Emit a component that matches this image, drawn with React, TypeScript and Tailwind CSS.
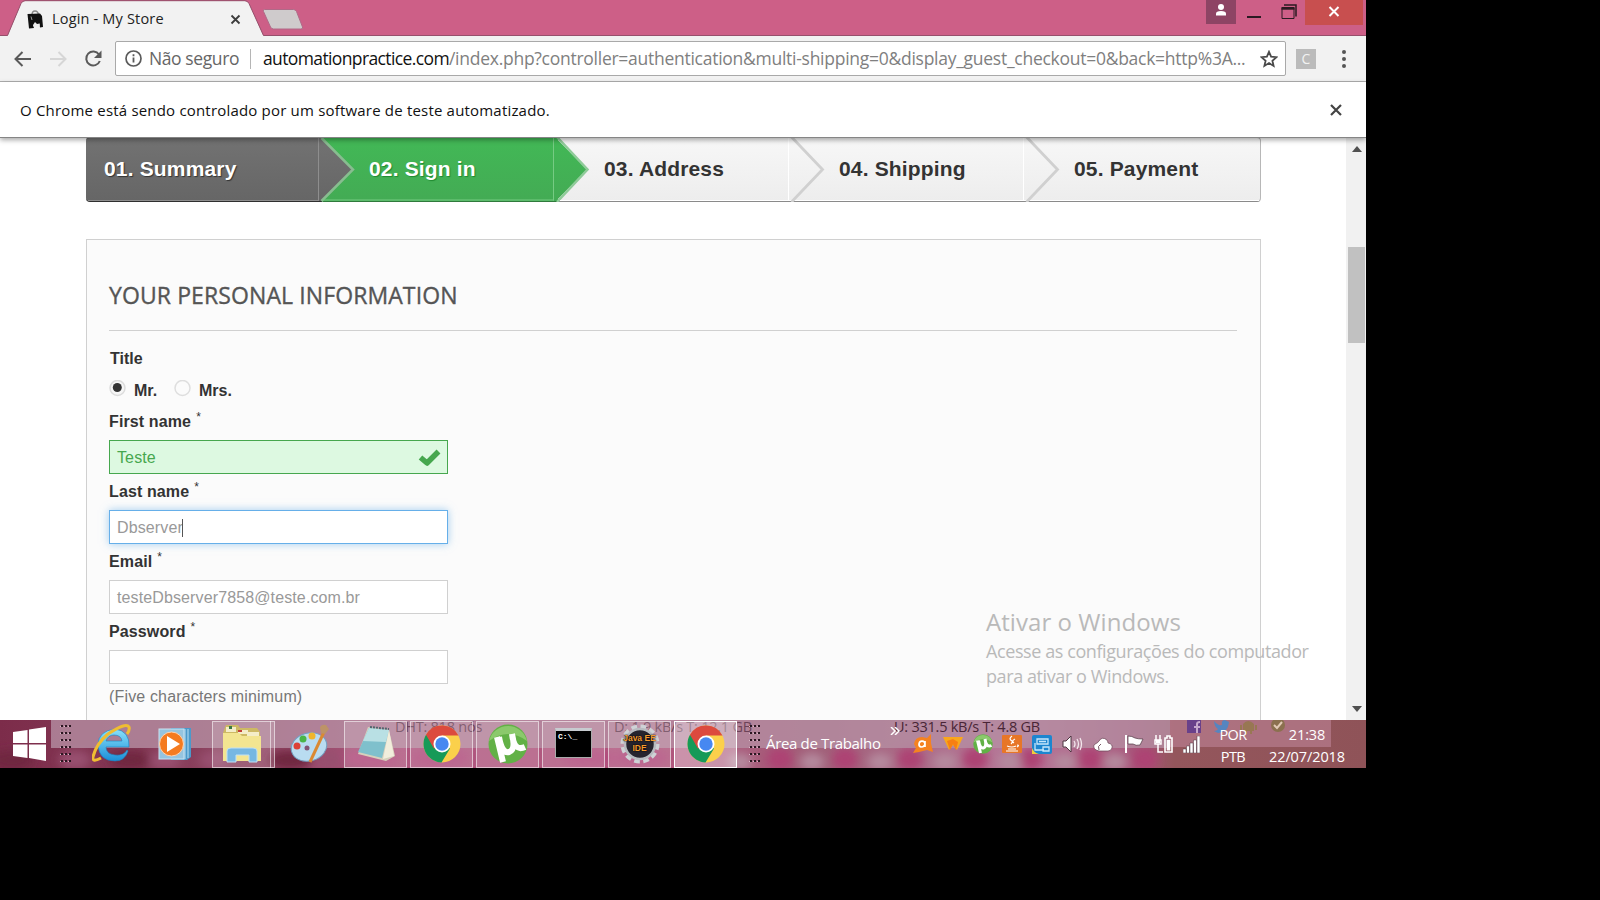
import type { ReactNode } from "react";

const steps = [
  { label: "01. Summary", cls: "w-[236px] pl-[18px] text-white rounded-l-[4px] bg-gradient-to-b from-[#727272] to-[#666] border-[#4b4b4b] border-b-[#2f2f2f] [text-shadow:1px_1px_1px_#333]" },
  { label: "02. Sign in", cls: "w-[236px] pl-[47px] text-white bg-gradient-to-b from-[#42b856] to-[#43ab54] border-[#3d9a4c] border-b-[#2f7a3c] [text-shadow:1px_1px_1px_#208931]" },
  { label: "03. Address", cls: "w-[233px] pl-[46px] text-[#333] bg-gradient-to-b from-[#f7f7f7] to-[#ededed] border-[#b7b7b7] border-b-[#8a8a8a]" },
  { label: "04. Shipping", cls: "w-[235px] pl-[48px] text-[#333] bg-gradient-to-b from-[#f7f7f7] to-[#ededed] border-[#b7b7b7] border-b-[#8a8a8a]" },
  { label: "05. Payment", cls: "w-[235px] pl-[48px] text-[#333] rounded-r-[4px] border-r bg-gradient-to-b from-[#f7f7f7] to-[#ededed] border-[#b7b7b7] border-b-[#8a8a8a]" },
];

function TabStrip() {
  return (
    <div className="relative flex h-[36px] items-start border-b border-[#96506c] bg-[#cd5f87]">
      <svg className="absolute left-0 top-0" width="320" height="36">
        <path d="M7.500 36 L21 3.500 Q22.500 1 25 1 H245 Q247.500 1 249 3.500 L263.500 36Z" fill="#f2f2f2" />
        <path d="M7.500 35.500 L21 3.500 Q22.500 .7 25 .7 H245 Q247.500 .7 249 3.500 L263.500 35.500" fill="none" stroke="#96506c" />
        <path d="M264.500 9.500 H293.500 Q295.500 9.500 296.500 11.500 L302.500 27 Q303.500 29 300.500 29 H273.500 Q271.500 29 270.500 27 L263.500 11.500 Q262.500 9.500 264.500 9.500Z" fill="#cfcbcc" stroke="#b06a88" />
      </svg>
      <div className="relative flex h-[36px] w-[264px] items-center pl-[27px]">
        <svg width="17" height="19" viewBox="0 0 17 19" className="mt-[2px]">
          <path d="M5 5 Q5 1 8 1 Q11 1 11.500 5" fill="none" stroke="#888" strokeWidth="1.400" />
          <path d="M.5 4 L13 3.500 L15 6 L16 17 L13 17.500 L12.500 13.500 L10 16 L6 15 L7 18 L2 18.500Z" fill="#111" />
          <path d="M6 15 L8 12 L10 14 L12.500 13.500 L12.500 16 L7 17Z" fill="#eee" />
          <path d="M4 6.500 L5 10" stroke="#999" />
        </svg>
        <span className="ml-[8px] mt-[2px] w-[170px] whitespace-nowrap text-[14.500px] tracking-[0.180px] text-[#222]">Login - My Store</span>
        <svg width="11" height="11" viewBox="0 0 11 11" className="ml-[8px] mt-[2px]"><path d="M1.500 1.500 L9.500 9.500 M9.500 1.500 L1.500 9.500" stroke="#3c3c3c" strokeWidth="1.800" /></svg>
      </div>
      <div className="ml-auto mr-[3px] flex items-start">
        <div className="flex h-[24px] w-[30px] justify-center bg-[#8e4464] pt-[4px]">
          <svg width="12" height="12" viewBox="0 0 12 12" fill="#fff"><circle cx="6" cy="3" r="3" /><path d="M1 11.500 V9.500 Q1 7 6 7 Q11 7 11 9.500 V11.500Z" /></svg>
        </div>
        <div className="ml-[11px] mt-[16px] h-[2px] w-[14px] bg-[#2a1a22]" />
        <svg width="16" height="16" viewBox="0 0 16 16" className="ml-[20px] mt-[4px]" fill="none" stroke="#2a1a22"><path d="M3 1 H15 V12.500" strokeWidth="1.500" /><path d="M1 3.500H13V14.500H1Z" /><path d="M.5 4.500H13.500" strokeWidth="2.400" /></svg>
        <div className="ml-[8px] flex h-[25px] w-[58px] items-start justify-center bg-[#c84f4f] pt-[6px]">
          <svg width="12" height="11" viewBox="0 0 12 11"><path d="M1.500 1 L10.500 10 M10.500 1 L1.500 10" stroke="#fff" strokeWidth="2" /></svg>
        </div>
      </div>
    </div>
  );
}

function Toolbar() {
  return (
    <div className="flex h-[46px] items-center border-b border-[#b0b0b0] bg-[#f2f2f2] pl-[14px]">
      <svg width="18" height="16" viewBox="0 0 18 16" fill="none" stroke="#5a5a5a" strokeWidth="2"><path d="M17 8H2 M8.500 1 L1.500 8 L8.500 15" /></svg>
      <svg className="ml-[18px]" width="18" height="16" viewBox="0 0 18 16" fill="none" stroke="#d6d6d6" strokeWidth="2"><path d="M0 8H15 M8.500 1 L15.500 8 L8.500 15" /></svg>
      <svg className="ml-[16px]" width="19" height="18" viewBox="0 0 19 18" fill="none"><path d="M15 4.500 A7 7 0 1 0 15.800 11" stroke="#5a5a5a" strokeWidth="2" /><path d="M17.500 .5V8H10Z" fill="#5a5a5a" /></svg>
      <div className="ml-[12px] flex h-[35px] w-[1171px] items-center rounded-[2px] border border-[#a9a9a9] bg-white pl-[9px]">
        <svg width="17" height="17" viewBox="0 0 17 17"><circle cx="8.500" cy="8.500" r="7.500" fill="none" stroke="#5a5a5a" strokeWidth="1.700" /><path d="M8.500 7.500V12.500 M8.500 4.300V6.200" stroke="#5a5a5a" strokeWidth="1.800" /></svg>
        <span className="ml-[7px] w-[92px] whitespace-nowrap text-[17.500px] tracking-[-0.400px] text-[#666]">Não seguro</span>
        <span className="ml-[9px] h-[20px] w-px bg-[#b5b5b5]" />
        <span className="ml-[12px] w-[985px] whitespace-nowrap text-[17.500px] tracking-[-0.265px] text-[#808080]"><span className="tracking-[-0.620px] text-[#111]">automationpractice.com</span>/index.php?controller=authentication&amp;multi-shipping=0&amp;display_guest_checkout=0&amp;back=http%3A...</span>
        <svg className="ml-[12px]" width="18" height="18" viewBox="0 0 18 18"><path d="M9 1.800 L11.100 6.700 L16.400 7.200 L12.400 10.700 L13.600 15.900 L9 13.100 L4.400 15.900 L5.600 10.700 L1.600 7.200 L6.900 6.700Z" fill="none" stroke="#4a4a4a" strokeWidth="1.800" /></svg>
      </div>
      <div className="ml-[10px] flex h-[20px] w-[20px] items-center justify-center bg-[#bbb] text-[14px] leading-none text-[#f2f2f2]">C</div>
      <div className="ml-[26px] flex flex-col gap-[3px]">
        <i className="h-[4px] w-[4px] rounded-full bg-[#555]" /><i className="h-[4px] w-[4px] rounded-full bg-[#555]" /><i className="h-[4px] w-[4px] rounded-full bg-[#555]" />
      </div>
    </div>
  );
}

function InfoBar() {
  return (
    <div className="relative z-10 flex h-[56px] items-center justify-between border-b border-[#858585] bg-white pl-[20px] pr-[24px] shadow-[0_2px_5px_rgba(0,0,0,0.35)]">
      <span className="mt-[2px] whitespace-nowrap text-[15px] tracking-[0.190px] text-[#111]">O Chrome está sendo controlado por um software de teste automatizado.</span>
      <svg width="12" height="12" viewBox="0 0 12 12"><path d="M1 1 L11 11 M11 1 L1 11" stroke="#444" strokeWidth="2.200" /></svg>
    </div>
  );
}

function StepBar() {
  return (
    <div className="relative ml-[86px] w-[1175px]">
      <ol className="flex font-['Liberation_Sans',sans-serif] text-[21px] font-bold tracking-[0.160px]">
        {steps.map((s) => (
          <li key={s.label} className={`flex h-[65px] items-center whitespace-nowrap border-y pb-px ${s.cls}`}>{s.label}</li>
        ))}
      </ol>
      <svg className="pointer-events-none absolute left-0 top-0" width="1175" height="65">
        <defs>
          <linearGradient id="gray" x1="0" y1="0" x2="0" y2="1"><stop offset="0" stopColor="#727272" /><stop offset="1" stopColor="#666" /></linearGradient>
          <linearGradient id="green" x1="0" y1="0" x2="0" y2="1"><stop offset="0" stopColor="#42b856" /><stop offset="1" stopColor="#43ab54" /></linearGradient>
        </defs>
        <path d="M235 1 L266.500 32.500 L235 64Z" fill="url(#gray)" />
        <path d="M235.500 1 L267 32.500 L235.500 64" fill="none" stroke="#88bd90" strokeWidth="2.500" />
        <path d="M470 1 L501 32.500 L470 64Z" fill="url(#green)" />
        <path d="M471 0 L501.500 32.500 L471 65" fill="none" stroke="#8fcb99" strokeWidth="2.500" />
        <path d="M232.500 1V63.500 M2 63.500H233" stroke="#8e8e8e" fill="none" />
        <path d="M467.500 1V63.500 M238 63H468" stroke="#76cb83" fill="none" />
        <path d="M702.500 1V63.500 M937.500 1V63.500 M474 63.500H1173" stroke="#fff" fill="none" />
        <path d="M705.500 0 L736.500 32.500 L705.500 65 M940.500 0 L971.500 32.500 L940.500 65" fill="none" stroke="#d0d0d0" strokeWidth="2.800" />
      </svg>
    </div>
  );
}

function Field({ label, box, children }: { label: string; box: string; children?: ReactNode }) {
  return (
    <div className="mb-[8px]">
      <div className="flex h-[20px] whitespace-nowrap font-bold leading-[20px] tracking-[0.120px] text-[#333]">{label}<span className="ml-[5px] mt-[-3px] text-[12px] font-normal leading-[16px]">*</span></div>
      <div className={`mt-[8px] flex h-[34px] w-[339px] items-center border px-[7px] pt-[2px] text-[16px] tracking-[0.120px] ${box}`}>{children}</div>
    </div>
  );
}

function PersonalInfo() {
  return (
    <div className="ml-[86px] mt-[37px] h-[520px] w-[1175px] border border-[#d0d0d0] bg-[#fbfbfb] pl-[22px] pr-[23px] pt-[40px] font-['Liberation_Sans',sans-serif] text-[16px]">
      <h3 className="h-[51px] whitespace-nowrap border-b border-[#d0d0d0] font-['Open_Sans',sans-serif] text-[23px] font-medium leading-[30px] tracking-[0.100px] text-[#555] [-webkit-text-stroke:0.350px_#555]">YOUR PERSONAL INFORMATION</h3>
      <div className="mt-[18px] pl-[1px] font-bold leading-[20px] text-[#333]">Title</div>
      <div className="mt-[10px] flex h-[21px] items-start font-bold leading-[24px] text-[#333]">
        <svg className="mt-px" width="17" height="17" viewBox="0 0 17 17"><circle cx="8.500" cy="8" r="7.500" fill="#f6f6f6" stroke="#dcdcdc" strokeWidth="1.500" /><circle cx="8.300" cy="7.500" r="4.500" fill="#333" /></svg>
        <span className="ml-[8px] w-[40px]">Mr.</span>
        <svg className="mt-px" width="17" height="17" viewBox="0 0 17 17"><circle cx="8.500" cy="8" r="7.500" fill="#fbfbfb" stroke="#dedede" strokeWidth="1.500" /></svg>
        <span className="ml-[8px]">Mrs.</span>
      </div>
      <div className="mt-[12px]">
        <Field label="First name" box="border-[#46a74e] bg-[#ddf9e1] text-[#46a74e]">
          Teste
          <svg className="mb-[2px] ml-auto mr-[-1px]" width="23" height="19" viewBox="0 0 23 19"><path d="M2.500 9.500 L9 15 L20.500 3.500" fill="none" stroke="#46a74e" strokeWidth="5.500" strokeLinejoin="round" /></svg>
        </Field>
        <Field label="Last name" box="border-[#66afe9] bg-white text-[#999] shadow-[0_0_8px_rgba(102,175,233,0.6)]">Dbserver<span className="ml-[-1px] h-[18px] w-px bg-[#555]" /></Field>
        <Field label="Email" box="border-[#d0d0d0] bg-white text-[#999]">testeDbserver7858@teste.com.br</Field>
        <Field label="Password" box="border-[#d0d0d0] bg-white" />
      </div>
      <div className="mt-[-5px] leading-[20px] tracking-[0.160px] text-[#777]">(Five characters minimum)</div>
    </div>
  );
}

function ChromeLogo() {
  return (
    <svg width="38" height="38" viewBox="0 0 38 38">
      <circle cx="19" cy="19" r="18.500" fill="#fbd04b" />
      <path d="M19 19 L3 9.700 A18.500 18.500 0 0 0 18.500 37.500 L27 23.600Z" fill="#169a58" />
      <path d="M19 19 L10.900 23.500 L3 9.700 A18.500 18.500 0 0 1 35.500 10.500 L19 10.500Z" fill="#dc4a3e" />
      <circle cx="19" cy="19" r="8.500" fill="#fff" /><circle cx="19" cy="19" r="6.700" fill="#4688f1" />
    </svg>
  );
}

function Grip() {
  return (
    <svg width="12" height="40" viewBox="0 0 12 40">
      {[1, 8, 15, 22, 29, 36].map((y) => [0, 4, 8].map((x) => (
        <g key={`${x}-${y}`}><rect x={x + 1} y={y} width="2" height="2" fill="#2b1721" /><rect x={x} y={y + 1} width="1" height="1" fill="#d9b9c8" /></g>
      )))}
    </svg>
  );
}

function UTorrent({ size }: { size: number }) {
  return (
    <svg width={size} height={size} viewBox="0 0 40 40">
      <circle cx="20" cy="20" r="19.500" fill="#62b146" /><path d="M1 17 A19.500 19.500 0 0 1 39 17 Q20 3 1 17Z" fill="#8bc96c" />
      <path d="M9 13 L15 38 M11 13 Q14 30 21 28 Q28 26 24 10 M24 10 Q26 28 37 23" fill="none" stroke="#fff" strokeWidth="6" />
    </svg>
  );
}

function TaskButton({ children, active }: { children: ReactNode; active?: boolean }) {
  return <div className={`flex h-[47px] w-[63px] items-center justify-center border ${active ? "border-white bg-white/35" : "border-white/55 bg-white/15"}`}>{children}</div>;
}

function Taskbar() {
  return (
    <div className="relative h-[48px] w-[1366px] bg-[#84405a] text-white">
      <svg className="absolute left-0 top-0" width="1366" height="48">
        <defs>
          <filter id="soft" x="-20%" y="-50%" width="140%" height="200%"><feGaussianBlur stdDeviation="5" /></filter>
          <linearGradient id="wall" x1="0" y1="0" x2="1" y2="0">
            <stop offset="0" stopColor="#7c2c4a" /><stop offset=".18" stopColor="#8c4460" /><stop offset=".3" stopColor="#b0577f" /><stop offset=".5" stopColor="#b0587d" />
            <stop offset=".6" stopColor="#a05f78" /><stop offset=".75" stopColor="#b7799a" /><stop offset=".83" stopColor="#a7577b" /><stop offset=".86" stopColor="#94565c" /><stop offset="1" stopColor="#8f5358" />
          </linearGradient>
        </defs>
        <rect width="1366" height="48" fill="url(#wall)" />
        <g filter="url(#soft)">
          {[12, 130, 290].map((x) => <ellipse key={x} cx={x} cy="40" rx="22" ry="10" fill="#702541" />)}
          {[75, 165, 215, 330].map((x) => <ellipse key={x} cx={x} cy="40" rx="16" ry="10" fill="#985070" />)}
          {[370, 440, 590, 640].map((x) => <ellipse key={x} cx={x} cy="38" rx="28" ry="9" fill="#b14c7d" />)}
          {[780, 845, 910, 975, 1030, 1090, 1145].map((x) => <ellipse key={x} cx={x} cy="39" rx="13" ry="12" fill="#ad4373" />)}
          {[740, 812, 880, 945, 1010, 1065, 1115].map((x) => <ellipse key={x} cx={x} cy="42" rx="12" ry="9" fill="#b58a9e" />)}
        </g>
        <rect x="51" width="1119" height="28" fill="#b58fa2" fillOpacity=".8" />
        <rect x="1170" width="161" height="27" fill="#bd8296" fillOpacity=".62" />
      </svg>
      <div className="absolute inset-x-0 top-[-3px] h-[20px] whitespace-nowrap text-[14.500px] leading-[20px] tracking-[-0.240px] text-[#552d41]/75">
        <span className="absolute left-[395px]">DHT: 818 nós</span>
        <span className="absolute left-[614px]">D: 1.9 kB/s T: 12.1 GB</span>
        <span className="absolute left-[894px] text-[#492536]">U: 331.5 kB/s T: 4.8 GB</span>
      </div>
      <svg className="absolute left-[1187px] top-0" width="140" height="16">
        <path d="M0 0H14V13H0Z" fill="#69408a" /><path d="M10 13V7H13 M7 7H13 M10 8V4Q10 2 13 2" stroke="#c7a8cd" strokeWidth="2" fill="none" />
        <path d="M27 1 Q31 6 35 5 Q34 0 38 0 L42 2 Q41 13 31 13 L27 11 Q30 11 31 9Q27 6 27 1Z" fill="#5585c0" />
        <path d="M56 4 Q61 -2 67 4 V11H56Z M53 5H55V10H53Z M68 5H70V10H68Z M58 11H60V14H58Z M63 11H65V14H63Z" fill="#987753" />
        <circle cx="91" cy="5" r="7" fill="#8b704f" /><path d="M87 5L90 8L95 2" fill="none" stroke="#e1c9b5" strokeWidth="2" />
      </svg>
      <div className="relative flex h-[48px] items-center">
        <svg className="ml-[13px] mt-[-1px]" width="34" height="34" viewBox="0 0 34 34" fill="#fff"><path d="M0 5L14.500 3V16H0Z M16 2.500L33 0V16H16Z M0 17.500H14.500V31L0 29Z M16 17.500H33V34L16 31Z" /></svg>
        <div className="ml-[13px]"><Grip /></div>
        <svg className="ml-[20px]" width="42" height="40" viewBox="0 0 42 40">
          <defs><linearGradient id="ie" x1="0" y1="0" x2="0" y2="1"><stop offset="0" stopColor="#8be2fb" /><stop offset="1" stopColor="#1b8fd8" /></linearGradient></defs>
          <path d="M35 26 Q32 32 23 31 Q14 30 14 23 H37 Q38 7 23 5 Q6 7 6 21 Q7 37 23 37 Q33 37 36 27Z M14 17 Q16 11 22 11 Q29 11 30 17Z" fill="url(#ie)" fillRule="evenodd" stroke="#1980be" strokeWidth=".6" />
          <path d="M9 34 Q0 39 1 33 Q4 20 16 10 Q34 -2 37 3 Q38 6 35 10" fill="none" stroke="#efbd32" strokeWidth="3" />
        </svg>
        <svg className="ml-[24px]" width="34" height="34" viewBox="0 0 34 34">
          <path d="M13 1H33V30L29 33H13Z" fill="#4b99ca" /><path d="M27 2V32 M30 2V31" stroke="#b7def2" />
          <rect x="1" y="2" width="25" height="30" fill="#95c4df" stroke="#c9e4f2" /><circle cx="13.500" cy="17" r="12" fill="#f47b20" stroke="#ffd4b0" /><path d="M9 9L22 17L9 25Z" fill="#fff" />
        </svg>
        <div className="ml-[20px] flex gap-[3px]">
          <div className="relative">
            <TaskButton>
              <svg className="mr-[4px]" width="42" height="40" viewBox="0 0 42 40">
                <path d="M3 6L5 1H17L19 4H36L39 8V37H2V9Z" fill="#cdb964" /><path d="M5 3H15V8H5Z M17 6H27V10H17Z M26 8H38V12H26Z" fill="#f4edc8" /><path d="M8 2H11V5H8Z" fill="#387a45" /><path d="M17 6H21V8H17Z" fill="#c43e35" />
                <path d="M2 9H18L21 12H40V37H2Z" fill="#f3e591" /><path d="M6 38V27Q6 24 10 24H32Q36 24 36 27V38H28V31H15V38Z" fill="#76b7e2" stroke="#c0e1f5" />
              </svg>
            </TaskButton>
            <i className="absolute right-[4px] top-0 h-[47px] w-px bg-white/55" />
          </div>
          <div className="flex h-[47px] w-[63px] items-center justify-center">
            <svg width="40" height="40" viewBox="0 0 40 40">
              <ellipse cx="19" cy="23" rx="18" ry="14" fill="#b9dcf1" stroke="#739fc1" transform="rotate(-15 19 23)" /><circle cx="7" cy="22" r="3.500" fill="#dc4037" /><circle cx="13" cy="15" r="3.500" fill="#4ab548" /><circle cx="22" cy="12" r="3.500" fill="#f0b52b" /><circle cx="17" cy="24" r="2.500" fill="#845477" />
              <path d="M34 8L20 38" stroke="#da8932" strokeWidth="3" /><path d="M31 9L30 3Q32 0 36 1L39 5L35 10Z" fill="#bd9367" />
            </svg>
          </div>
          <TaskButton>
            <svg width="40" height="38" viewBox="0 0 40 38"><path d="M12 2L33 5L39 31L30 36L2 29Z" fill="#d7d0bc" /><path d="M13 3L33 5L26 33L2 27Z" fill="#7fc0cc" /><path d="M13 3L33 5L30 17L7 16Z" fill="#b9e0e4" /><path d="M33 5L38 31L27 34Z" fill="#f2eedc" /><path d="M14 2L33 4" stroke="#51666d" strokeWidth="2" strokeDasharray="2 1" /></svg>
          </TaskButton>
          <TaskButton><ChromeLogo /></TaskButton>
          <TaskButton><UTorrent size={40} /></TaskButton>
          <TaskButton>
            <div className="mb-[2px] flex h-[30px] w-[37px] items-start border border-[#aaa] border-t-[3px] border-t-[#c7cbd0] bg-black pl-[2px] pt-[2px] font-['Liberation_Mono',monospace] text-[8px] font-bold leading-[8px] text-white">C:\_</div>
          </TaskButton>
          <TaskButton>
            <div className="relative flex h-[40px] w-[40px] items-center justify-center">
              <svg className="absolute" width="40" height="40" viewBox="0 0 40 40"><circle cx="20" cy="20" r="17" fill="none" stroke="#cfd2d6" strokeWidth="5" strokeDasharray="5.500 3.400" /><circle cx="20" cy="20" r="15" fill="#26242e" stroke="#b8bbc0" strokeWidth="2.500" /></svg>
              <div className="relative mb-[3px] flex flex-col items-center whitespace-nowrap font-['Liberation_Sans',sans-serif] text-[8.500px] font-bold leading-[10px] text-[#f39a2e] [text-shadow:0_0_2px_#000,0_0_1px_#000]"><span>Java EE</span><span>IDE</span></div>
            </div>
          </TaskButton>
          <TaskButton active><ChromeLogo /></TaskButton>
        </div>
        <div className="ml-[12px]"><Grip /></div>
        <span className="ml-[5px] mt-[-2px] w-[117px] whitespace-nowrap text-[15px] tracking-[-0.340px]">Área de Trabalho</span>
        <svg className="mb-[26px] ml-[7px]" width="10" height="8" viewBox="0 0 10 8" fill="none" stroke="#fff" strokeWidth="1.500"><path d="M1 0L5 4L1 8 M5 0L9 4L5 8" /></svg>
        <div className="ml-[12px] flex items-center">
          <svg width="22" height="20" viewBox="0 0 22 20"><path d="M2 10Q3 3 10 3L15 4L19 0V9L21 18L15 16L7 18L1 19L4 14Z" fill="#f58220" /><path d="M13 7V13 M13 10A3 3 0 1 0 9 13Q13 13 13 9" stroke="#fff" strokeWidth="1.700" fill="none" /></svg>
          <svg className="ml-[9px]" width="20" height="14" viewBox="0 0 20 14"><path d="M0 0H20L14 13L10 8L6 13Z" fill="#f9a71b" /><path d="M4 4L10 2L15 5L13 13L10 7L7 13Z" fill="#f77f13" /></svg>
          <div className="ml-[10px]"><UTorrent size={20} /></div>
          <svg className="ml-[9px]" width="20" height="18" viewBox="0 0 20 18"><rect width="20" height="18" rx="1" fill="#e77627" /><path d="M10 1Q6 4 10 6Q11 7 9 9 M13 4Q9 6 12 8 M5 11Q10 13 14 11 M6 14H14 M4 16H16 M15 10Q18 10 15 12" fill="none" stroke="#fff" strokeWidth="1.200" /></svg>
          <svg className="ml-[10px]" width="20" height="19" viewBox="0 0 20 19"><rect width="20" height="19" rx="2" fill="#1c86cf" /><path d="M5 4H16V9H5Z M3 8V15H12 M7 6.500H14 M11 12H17V16H11Z" stroke="#c6e7fb" fill="none" strokeWidth="1.300" /><path d="M0 13Q2 18 7 19H0Z" fill="#f3cc3a" /></svg>
          <svg className="ml-[10px]" width="21" height="20" viewBox="0 0 21 20"><path d="M1 7H4L9 2V18L4 13H1Z" fill="#fff" stroke="#4d3540" /><path d="M12 7Q14 10 12 13 M15 5Q18 10 15 15 M18 4Q21 10 18 16" fill="none" stroke="#f3e6ec" strokeWidth="1.300" /></svg>
          <svg className="ml-[10px]" width="20" height="15" viewBox="0 0 20 15"><path d="M3 13Q-1 10 2 7Q5 6 6 4Q9 -1 14 3Q15 5 15 6Q20 7 19 11Q18 14 15 14H6Z" fill="#fff" stroke="#684555" strokeWidth=".7" /><path d="M6 13Q4 9 8 7" fill="none" stroke="#684555" strokeWidth=".9" /></svg>
          <svg className="ml-[11px]" width="20" height="20" viewBox="0 0 20 20"><path d="M2 1V19" stroke="#fff" strokeWidth="2" /><path d="M4 2Q8 2 11 4Q14 5 19 5L16 11Q12 12 9 10L4 10Z" fill="#fff" stroke="#4d3540" strokeWidth=".7" /></svg>
          <svg className="ml-[10px]" width="20" height="20" viewBox="0 0 20 20"><path d="M2 1V6 M6 1V6 M1 6H7V10H1Z M4 10V18H9" stroke="#fff" strokeWidth="1.500" fill="none" /><path d="M2 6H6V9H2Z" fill="#fff" /><path d="M11 4H13V2H16V4H18V18H11Z" fill="none" stroke="#fff" strokeWidth="1.600" /><rect x="12.700" y="6" width="3.600" height="10.500" fill="#fff" /></svg>
          <svg className="ml-[9px]" width="17" height="17" viewBox="0 0 17 17" fill="#fff" stroke="#4d3540" strokeWidth=".5"><path d="M0 13H3V17H0Z M3.500 10H6.500V17H3.500Z M7 7H10V17H7Z M10.500 4H13.500V17H10.500Z M14 0H17V17H14Z" /></svg>
        </div>
        <div className="ml-[18px] flex w-[30px] flex-col items-center whitespace-nowrap pt-[3px] text-[14.500px] leading-[22px] tracking-[-0.600px]"><span>POR</span><span>PTB</span></div>
        <div className="ml-[20px] flex w-[78px] flex-col items-center whitespace-nowrap pt-[3px] text-[14.500px] leading-[22px] tracking-[-0.100px]"><span>21:38</span><span>22/07/2018</span></div>
      </div>
    </div>
  );
}

export default function App() {
  return (
    <div className="h-[900px] w-[1600px] overflow-hidden bg-black font-['Open_Sans',sans-serif]">
      <div className="flex h-[768px] w-[1366px] flex-col bg-white">
        <TabStrip />
        <Toolbar />
        <InfoBar />
        <div className="relative mt-[-1px] flex h-[583px] overflow-hidden">
          <div className="w-[1346px]">
            <StepBar />
            <PersonalInfo />
          </div>
          <div className="flex w-[20px] flex-col items-center bg-[#f1f1f1]">
            <svg className="ml-px mt-[9px]" width="10" height="6"><path d="M0 6L5 0L10 6Z" fill="#505050" /></svg>
            <div className="mt-[95px] h-[96px] w-[17px] bg-[#c1c1c1]" />
            <svg className="mb-[8px] ml-px mt-auto" width="10" height="6"><path d="M0 0L5 6L10 0Z" fill="#505050" /></svg>
          </div>
          <div className="absolute left-[986px] top-[469px] whitespace-nowrap text-[#b9b9b9]">
            <div className="text-[24px] leading-[32px] tracking-[0.060px]">Ativar o Windows</div>
            <div className="mt-[1px] text-[18px] leading-[25px] tracking-[-0.410px]">Acesse as configurações do computador<br />para ativar o Windows.</div>
          </div>
        </div>
        <Taskbar />
      </div>
    </div>
  );
}
